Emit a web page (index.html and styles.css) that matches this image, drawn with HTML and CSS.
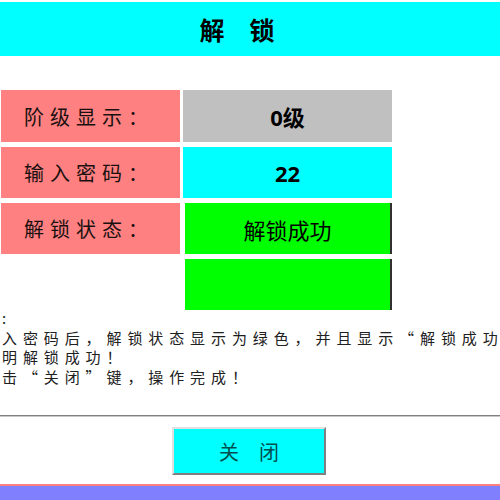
FILE: index.html
```html
<!DOCTYPE html>
<html lang="zh">
<head>
<meta charset="utf-8">
<title>解锁</title>
<link rel="stylesheet" href="styles.css">
</head>
<body>
<div class="page">
  <header class="title-bar"><h1 class="title">解　锁</h1></header>
  <section class="grid">
    <div class="label">阶级显示：</div>
    <div class="value gray bold">0级</div>
    <div class="label">输入密码：</div>
    <div class="value cyan bold">22</div>
    <div class="label">解锁状态：</div>
    <div class="value green">解锁成功</div>
    <div class="empty"></div>
    <div class="value green"></div>
  </section>
  <div class="notes">
    <div class="line">:</div>
    <div class="line">入密码后，解锁状态显示为绿色，并且显示“解锁成<span class="last">功</span></div>
    <div class="line">明解锁成功！</div>
    <div class="line">击“关闭”键，操作完成！</div>
  </div>
  <div class="rule"></div>
  <div class="actions"><button class="close-btn">关　闭</button></div>
  <footer class="footer"></footer>
</div>
</body>
</html>
```
FILE: styles.css
```css
html, body {
  margin: 0;
  padding: 0;
  background: #ffffff;
  overflow: hidden;
}
.page {
  width: 500px;
  height: 500px;
  overflow: hidden;
  display: flex;
  flex-direction: column;
  font-family: "Noto Sans CJK SC", "Noto Sans", sans-serif;
}
.title-bar {
  margin-top: 2px;
  height: 54px;
  background: #00ffff;
  display: flex;
  align-items: center;
  justify-content: center;
  padding-right: 26px;
}
.title {
  margin: 0;
  font-size: 25px;
  font-weight: bold;
  color: #000;
  letter-spacing: 0;
}
.grid {
  margin-top: 34px;
  margin-left: 1px;
  display: grid;
  grid-template-columns: 179px 209px;
  grid-template-rows: 52px 51px 51px 51px;
  column-gap: 3px;
  row-gap: 5px;
}
.label {
  background: #ff8080;
  color: #1a1010;
  font-size: 20px;
  letter-spacing: 6px;
  padding-left: 23px;
  display: flex;
  align-items: center;
}
.value {
  display: flex;
  align-items: center;
  justify-content: center;
  font-family: "Noto Sans", "Noto Sans CJK SC", sans-serif;
  font-size: 22px;
  color: #000;
}
.bold { font-weight: bold; }
.gray { background: #c0c0c0; }
.cyan { background: #00ffff; }
.green {
  background: #00ff00;
  margin-left: 2px;
  border-right: 2px solid #303030;
}
.notes {
  margin-top: -2px;
  font-size: 15px;
  line-height: 19.5px;
  letter-spacing: 5.9px;
  color: #202020;
  white-space: nowrap;
  padding-left: 2px;
}
.last { letter-spacing: 0; }
.rule {
  margin-top: 29px;
  height: 1px;
  background: #808080;
  border-bottom: 1px solid #c8c8c8;
}
.actions {
  display: flex;
  justify-content: center;
  margin-top: 10px;
}
.close-btn {
  width: 154px;
  height: 48px;
  background: #00ffff;
  border: 2px solid;
  border-color: #e0e0e0 #808080 #808080 #e0e0e0;
  font-family: "Noto Sans CJK SC", sans-serif;
  font-size: 20px;
  color: #005050;
  padding: 0;
  margin-left: -2px;
}
.footer {
  margin-top: 9px;
  flex: 1;
  background: #8080ff;
  border-top: 2px solid #ff8080;
}
```
